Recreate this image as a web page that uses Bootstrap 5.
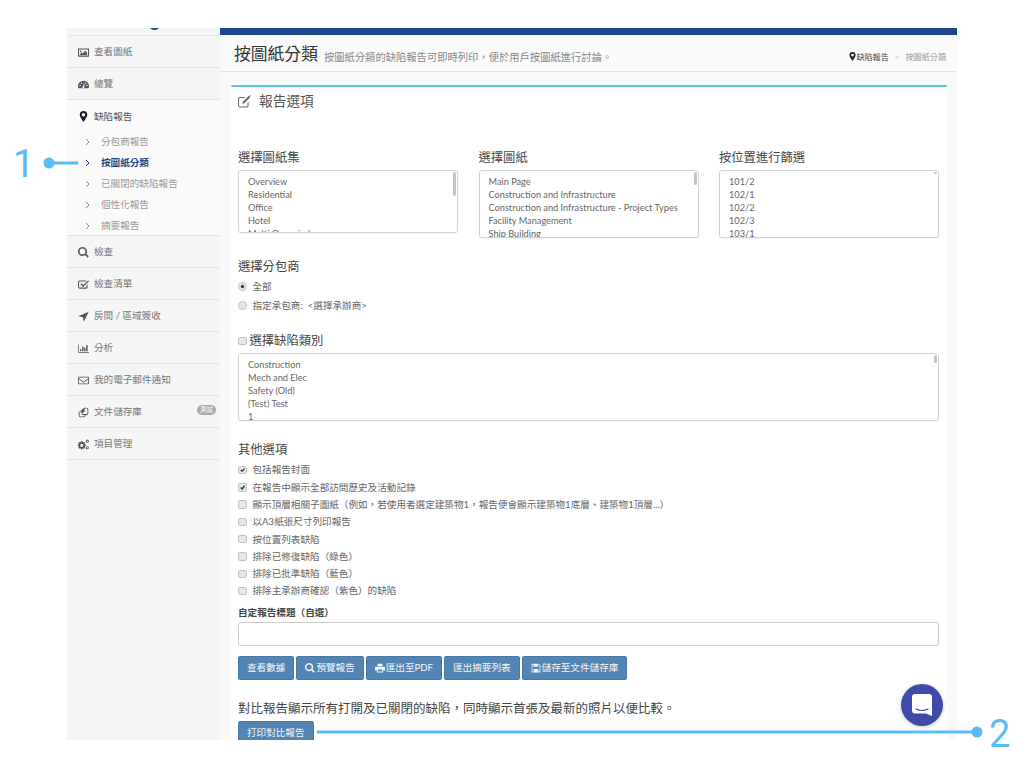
<!DOCTYPE html>
<html lang="zh-Hant">
<head>
  <meta charset="UTF-8" />
  <meta name="viewport" content="width=device-width, initial-scale=1" />
  <title>按圖紙分類</title>
  <link href="https://cdn.jsdelivr.net/npm/bootstrap@5.3.0/dist/css/bootstrap.min.css" rel="stylesheet" />
  <style>
    html, body { height: 768px; overflow: hidden; background: #fff; }
    body {
      position: relative;
      font-family: Lato, "Noto Sans CJK TC", sans-serif;
      font-size: 9.6px;
      color: #666;
      line-height: 1.4;
    }
    .app-frame { margin: 28px 0 0 67px; width: 890px; height: 712px; overflow: hidden; background: #f9f9f9; }

    /* sidebar */
    .side-col { width: 153px; flex: none; background: #f5f5f5; }
    .side-logo { height: 7.5px; overflow: hidden; border-bottom: 1px solid #e6e6e6; }
    .side-logo i { display: block; width: 11px; height: 11px; margin: -9px 0 0 82px; border-radius: 50%; background: #1f4788; }
    .side-link { height: 32px; padding: 2px 0 0 11px; gap: 5px; color: #777; border-bottom: 1px solid #e3e3e3; text-decoration: none; }
    .side-link svg { width: 11px; height: 11px; flex: none; fill: #555; }
    .side-open { height: 136px; background: #fafafa; border-bottom: 1px solid #e3e3e3; }
    .side-open .side-link { height: 32px; border-bottom: 0; color: #555; }
    .side-open .side-link svg { fill: #222; }
    .side-sub { height: 21px; padding-left: 18px; gap: 11px; color: #999; text-decoration: none; }
    .side-sub svg { width: 5px; height: 8px; flex: none; fill: none; stroke: #888; stroke-width: 1; }
    .side-sub.current { color: #1f4788; font-weight: 700; }
    .side-sub.current svg { stroke: #1f4788; }
    .side-pill { font-size: 6.5px; line-height: 10px; background: #aaa; color: #fff; border-radius: 5px; padding: 0 3px; margin: -4px 4px 0 auto; }

    /* main */
    .top-stripe { height: 7px; background: #1f4788; }
    .page-head { height: 37px; padding: 3px 11px 0 14px; background: #fafafa; border-bottom: 1px solid #e5e5e5; }
    .page-title { font-size: 16.8px; color: #333; font-weight: 400; margin: 0; line-height: 1; }
    .page-desc { font-size: 10.3px; color: #888; margin: 5px 0 0 6px; }
    .crumbs { margin: 7px 0 0 auto; font-size: 8.1px; color: #444; }
    .crumbs svg { width: 7px; height: 9px; fill: #222; vertical-align: -1px; }
    .crumbs .sep { color: #bbb; margin: 0 6px; }
    .crumbs .here { color: #999; }
    .report-box { margin: 13px 10px 0 11px; background: #fff; border-top: 2px solid #5bc0de; border-radius: 2px 2px 0 0; padding: 5px 8px 0 7px; height: 700px; }
    .box-title { font-size: 13.7px; line-height: 18px; color: #555; margin: 0; font-weight: 400; gap: 8px; }
    .box-title svg { width: 13px; height: 13px; fill: #666; }
    .report-picks { margin-top: 40px; }
    .sec-title { font-size: 12.3px; line-height: 16px; color: #444; font-weight: 400; margin: 0 0 4px; }
    .sec-sub { margin: 21px 0 2px; }
    .sec-cat { margin: 18px 0 4px; gap: 3px; }
    .sec-other { margin: 21px 0 3.4px; }
    .sec-cat .form-check-input[type=checkbox] { width: 8.5px; height: 8.5px; margin: 0; flex: none; background-color: #e6e6e6; border: 1px solid #c4c4c4; border-radius: 2px; }
    .pick-wrap { position: relative; }
    .pick-list {
      display: block; width: 100%; padding: 5px 0 0 9px; font-size: 9.2px; line-height: 13px; color: #666;
      border: 1px solid #d4d4d4; border-radius: 3px; outline: 0; overflow: hidden; background: #fff;
      box-shadow: 0 1px 1px rgba(0,0,0,.05);
    }
    .pick-short { height: 63px; }
    .pick-tall { height: 68px; }
    .pick-list option { padding: 0; min-height: 13px; line-height: 13px; }
    .fake-thumb { position: absolute; top: 2px; right: 2px; width: 3px; background: #c4c4c4; border-radius: 2px; }
    .pick-col { width: 220px; flex: none; }
    .tick-row { height: 17.3px; gap: 6px; color: #666; margin: 0; }
    .radio-row { height: 19px; }
    .tick-row .form-check-input {
      width: 8.5px; height: 8.5px; margin: 0; flex: none; background-color: #e6e6e6; border: 1px solid #c4c4c4;
      border-radius: 2px; box-shadow: none;
    }
    .tick-row .form-check-input[type=radio] { border-radius: 50%; }
    .tick-row .form-check-input:checked { background-color: #e6e6e6; border-color: #c4c4c4; background-size: 100%; }
    .tick-row .form-check-input[type=checkbox]:checked {
      background-image: url("data:image/svg+xml,%3csvg xmlns='http://www.w3.org/2000/svg' viewBox='0 0 20 20'%3e%3cpath fill='none' stroke='%23333' stroke-width='4' d='M5 10l4 4 7-9'/%3e%3c/svg%3e");
    }
    .tick-row .form-check-input[type=radio]:checked {
      background-image: url("data:image/svg+xml,%3csvg xmlns='http://www.w3.org/2000/svg' viewBox='-4 -4 8 8'%3e%3ccircle r='2' fill='%23444'/%3e%3c/svg%3e");
    }
    .title-label { font-size: 9.6px; font-weight: 700; color: #444; line-height: 14px; margin: 6px 0 2px; }
    .title-input { height: 24px; min-height: 24px; padding: 0 8px; border: 1px solid #ccc; border-radius: 3px; font-size: 10px; box-shadow: none; }
    .btn-line { margin-top: 10px; gap: 2px; }
    .act-btn {
      height: 24px; padding: 0 8px; background: #5285b3; border: 1px solid #4878a5; border-radius: 2px;
      color: #f2f5f8; font-size: 9.6px; line-height: 1; white-space: nowrap; gap: 1px;
    }
    .act-btn:hover { background: #4878a5; color: #fff; border-color: #4878a5; }
    .act-btn svg { width: 10px; height: 10px; fill: #f2f5f8; }
    .compare-note { font-size: 12.5px; line-height: 18px; color: #444; margin: 20px 0 3px; }

    /* floating chat button */
    .chat-fab { position: absolute; left: 901px; top: 684px; width: 42px; height: 42px; border-radius: 50%; background: #3f4ba8; box-shadow: 0 1px 5px rgba(0,0,0,.2); border: 0; padding: 0; }
    .chat-fab svg { width: 42px; height: 42px; display: block; }

    /* callouts drawn on top of the screenshot */
    .callout { position: absolute; left: 0; top: 0; width: 1024px; height: 768px; pointer-events: none; }
    .callout-num { position: absolute; font-family: Roboto, "Liberation Sans", sans-serif; font-size: 38px; line-height: 38px; color: #5bbcf5; font-weight: 400; }
    .num-one { left: 13px; top: 145px; }
    .num-two { left: 989px; top: 715px; }
  </style>
</head>
<body>
  <div class="app-frame d-flex">
    <!-- Sidebar -->
    <nav class="side-col">
      <div class="side-logo"><i></i></div>
      <a class="side-link d-flex align-items-center" href="#">
        <svg viewBox="0 0 16 16"><path d="M0 2h16v12H0zm1.500 1.500v9h13v-9zM4 5a1.300 1.300 0 1 1 0 2.600A1.300 1.300 0 0 1 4 5zm-1 6.500V10l2-2 1.500 1.500 4-4 2.500 2.500v3.500z" fill-rule="evenodd"/></svg>查看圖紙</a>
      <a class="side-link d-flex align-items-center" href="#">
        <svg viewBox="0 0 16 16"><path d="M8 2.500a8 8 0 0 0-8 8c0 1.100.2 2 .6 3h14.800c.4-1 .6-1.900.6-3a8 8 0 0 0-8-8zM3 10.500a1 1 0 1 1 0-2 1 1 0 0 1 0 2zm2-3.500a1 1 0 1 1 0-2 1 1 0 0 1 0 2zm4.200 5.300a1.500 1.500 0 1 1-2-1.200L8.500 6h.8zM11 7a1 1 0 1 1 0-2 1 1 0 0 1 0 2zm2 3.500a1 1 0 1 1 0-2 1 1 0 0 1 0 2z" fill-rule="evenodd"/></svg>總覽</a>
      <div class="side-open">
        <a class="side-link d-flex align-items-center" href="#">
          <svg viewBox="0 0 16 16"><path d="M8 0a5.500 5.500 0 0 0-5.500 5.500C2.500 9 8 16 8 16s5.500-7 5.500-10.500A5.500 5.500 0 0 0 8 0zm0 8a2.500 2.500 0 1 1 0-5 2.500 2.500 0 0 1 0 5z" fill-rule="evenodd"/></svg>缺陷報告</a>
        <a class="side-sub d-flex align-items-center" href="#"><svg viewBox="0 0 5 8"><path d="M1 1l3 3-3 3"/></svg>分包商報告</a>
        <a class="side-sub current d-flex align-items-center" href="#"><svg viewBox="0 0 5 8"><path d="M1 1l3 3-3 3"/></svg>按圖紙分類</a>
        <a class="side-sub d-flex align-items-center" href="#"><svg viewBox="0 0 5 8"><path d="M1 1l3 3-3 3"/></svg>已關閉的缺陷報告</a>
        <a class="side-sub d-flex align-items-center" href="#"><svg viewBox="0 0 5 8"><path d="M1 1l3 3-3 3"/></svg>個性化報告</a>
        <a class="side-sub d-flex align-items-center" href="#"><svg viewBox="0 0 5 8"><path d="M1 1l3 3-3 3"/></svg>摘要報告</a>
      </div>
      <a class="side-link d-flex align-items-center" href="#">
        <svg viewBox="0 0 16 16"><path d="M6.500 0a6.500 6.500 0 1 0 3.700 11.800l3.600 3.700 1.900-1.900-3.700-3.600A6.500 6.500 0 0 0 6.500 0zm0 2.300a4.200 4.200 0 1 1 0 8.400 4.200 4.200 0 0 1 0-8.400z" fill-rule="evenodd"/></svg>檢查</a>
      <a class="side-link d-flex align-items-center" href="#">
        <svg viewBox="0 0 16 16"><path d="M2.500 2H12v1.500H2.500a1 1 0 0 0-1 1v7a1 1 0 0 0 1 1h9a1 1 0 0 0 1-1V9L14 7.500v4a2.500 2.500 0 0 1-2.500 2.500h-9A2.500 2.500 0 0 1 0 11.500v-7A2.500 2.500 0 0 1 2.500 2zm12.300 0L16 3.200 7.500 11.500 3.500 7.600l1.300-1.300 2.700 2.600z"/></svg>檢查清單</a>
      <a class="side-link d-flex align-items-center" href="#">
        <svg viewBox="0 0 16 16"><path d="M15.500 1L8.500 15.500 7 9 .5 7.800z"/></svg>房間 / 區域簽收</a>
      <a class="side-link d-flex align-items-center" href="#">
        <svg viewBox="0 0 16 16"><path d="M0 2h1v11h15v1H0zm3 7h2v3H3zm3-4h2v7H6zm3 2h2v5H9zm3-4h2v9h-2z"/></svg>分析</a>
      <a class="side-link d-flex align-items-center" href="#">
        <svg viewBox="0 0 16 16"><path d="M1.500 2.500h13A1.500 1.500 0 0 1 16 4v8a1.500 1.500 0 0 1-1.500 1.500h-13A1.500 1.500 0 0 1 0 12V4a1.500 1.500 0 0 1 1.500-1.500zm0 1.200a.3.300 0 0 0-.3.300v.7L8 9.700l6.800-5V4a.3.300 0 0 0-.3-.3zm13.300 2.500L8 11.200 1.200 6.200V12c0 .2.100.3.300.3h13c.2 0 .3-.1.300-.3z" fill-rule="evenodd"/></svg>我的電子郵件通知</a>
      <a class="side-link d-flex align-items-center" href="#">
        <svg viewBox="0 0 16 16"><path d="M9 1h3.500A2.500 2.500 0 0 1 15 3.500V9a2.500 2.500 0 0 1-2.500 2.500H11v1A2.500 2.500 0 0 1 8.500 15h-5A2.500 2.500 0 0 1 1 12.500V8zm-.5 1.800L2.300 8.500v4c0 .7.500 1.200 1.200 1.200h5c.7 0 1.200-.5 1.200-1.200v-1H7.500A2.500 2.500 0 0 1 5 9V6zm1.200-.5v3.700L6.300 9c0 .7.500 1.200 1.200 1.200h5c.7 0 1.200-.5 1.200-1.200V3.500c0-.7-.5-1.200-1.200-1.200z" fill-rule="evenodd"/></svg>文件儲存庫<span class="side-pill">測試</span></a>
      <a class="side-link d-flex align-items-center" href="#">
        <svg viewBox="0 0 16 16"><path d="M6.300 3l.4 1.500 1.100.5 1.300-.8 1.300 1.300-.8 1.300.5 1.100 1.500.4v1.800l-1.500.4-.5 1.100.8 1.300-1.300 1.300-1.300-.8-1.100.5-.4 1.500H4.500l-.4-1.500-1.100-.5-1.300.8L.4 12.900l.8-1.300-.5-1.100L-.8 10.100V8.300l1.500-.4.500-1.100-.8-1.300L1.700 4.200l1.300.8 1.100-.5L4.500 3zM5.400 6.900a2.300 2.300 0 1 0 0 4.600 2.300 2.300 0 0 0 0-4.600zM13.500.8a2.300 2.300 0 1 1 0 4.600 2.300 2.300 0 0 1 0-4.600zm0 1.300a1 1 0 1 0 0 2 1 1 0 0 0 0-2zm0 8.300a2.300 2.300 0 1 1 0 4.600 2.300 2.300 0 0 1 0-4.600zm0 1.300a1 1 0 1 0 0 2 1 1 0 0 0 0-2z" fill-rule="evenodd"/></svg>項目管理</a>
    </nav>

    <!-- Main content -->
    <main class="flex-grow-1">
      <div class="top-stripe"></div>
      <div class="page-head d-flex align-items-center">
        <h1 class="page-title">按圖紙分類</h1>
        <span class="page-desc">按圖紙分類的缺陷報告可即時列印，便於用戶按圖紙進行討論。</span>
        <div class="crumbs">
          <svg viewBox="0 0 12 16"><path d="M6 0a5.500 5.500 0 0 0-5.500 5.500C.5 9 6 16 6 16s5.500-7 5.500-10.500A5.500 5.500 0 0 0 6 0zm0 8a2.500 2.500 0 1 1 0-5 2.500 2.500 0 0 1 0 5z" fill-rule="evenodd"/></svg>缺陷報告<span class="sep">&gt;</span><span class="here">按圖紙分類</span>
        </div>
      </div>

      <section class="report-box">
        <h2 class="box-title d-flex align-items-center">
          <svg viewBox="0 0 16 16"><path d="M2.500 2.500H9L7.800 3.800H2.500c-.7 0-1.200.5-1.200 1.200v8c0 .7.500 1.200 1.200 1.200h8c.7 0 1.200-.5 1.200-1.200V9.500L13 8.200V13a2.500 2.500 0 0 1-2.500 2.500h-8A2.500 2.500 0 0 1 0 13V5a2.500 2.500 0 0 1 2.500-2.500zM13.500.8l1.800 1.800-7.500 7.500-2.600.8.800-2.600zM16 1.900L14.200.1c.3-.2.700-.2 1 0l.8.800c.3.300.3.700 0 1z"/></svg>報告選項</h2>

        <div class="d-flex justify-content-between align-items-start report-picks">
          <div class="pick-col">
            <h3 class="sec-title">選擇圖紙集</h3>
            <div class="pick-wrap">
              <select class="pick-list pick-short" multiple>
                <option>Overview</option><option>Residential</option><option>Office</option><option>Hotel</option><option>Multi Occupied</option><option>Retail</option><option>Industrial</option><option>Education</option><option>Healthcare</option>
              </select>
              <i class="fake-thumb" style="height:24px"></i>
            </div>
          </div>
          <div class="pick-col">
            <h3 class="sec-title">選擇圖紙</h3>
            <div class="pick-wrap">
              <select class="pick-list pick-tall" multiple>
                <option>Main Page</option><option>Construction and Infrastructure</option><option>Construction and Infrastructure - Project Types</option><option>Facility Management</option><option>Ship Building</option><option>Oil and Gas</option><option>Mining</option><option>Utilities</option><option>Other</option><option>Fit Out</option><option>Residential</option><option>Office</option><option>Hotel</option>
              </select>
              <i class="fake-thumb" style="height:13px"></i>
            </div>
          </div>
          <div class="pick-col">
            <h3 class="sec-title">按位置進行篩選</h3>
            <div class="pick-wrap">
              <select class="pick-list pick-tall" multiple>
                <option>101/2</option><option>102/1</option><option>102/2</option><option>102/3</option><option>103/1</option><option>103/2</option><option>104/1</option><option>104/2</option><option>105/1</option><option>105/2</option><option>106/1</option><option>106/2</option>
              </select>
              <i class="fake-thumb" style="height:2px"></i>
            </div>
          </div>
        </div>

        <h3 class="sec-title sec-sub">選擇分包商</h3>
        <label class="tick-row radio-row d-flex align-items-center"><input class="form-check-input" type="radio" name="sub" checked />全部</label>
        <label class="tick-row radio-row d-flex align-items-center"><input class="form-check-input" type="radio" name="sub" />指定承包商:&nbsp; &lt;選擇承辦商&gt;</label>

        <h3 class="sec-title sec-cat d-flex align-items-center"><input class="form-check-input" type="checkbox" />選擇缺陷類別</h3>
        <div class="pick-wrap">
          <select class="pick-list pick-tall" multiple>
            <option>Construction</option><option>Mech and Elec</option><option>Safety (Old)</option><option>(Test) Test</option><option>1</option><option>2</option><option>3</option><option>4</option><option>5</option><option>6</option><option>7</option><option>8</option>
          </select>
          <i class="fake-thumb" style="height:8px"></i>
        </div>

        <h3 class="sec-title sec-other">其他選項</h3>
        <label class="tick-row d-flex align-items-center"><input class="form-check-input" type="checkbox" checked />包括報告封面</label>
        <label class="tick-row d-flex align-items-center"><input class="form-check-input" type="checkbox" checked />在報告中顯示全部訪問歷史及活動記錄</label>
        <label class="tick-row d-flex align-items-center"><input class="form-check-input" type="checkbox" />顯示頂層相關子圖紙（例如，若使用者選定建築物1，報告便會顯示建築物1底層、建築物1頂層...）</label>
        <label class="tick-row d-flex align-items-center"><input class="form-check-input" type="checkbox" />以A3紙張尺寸列印報告</label>
        <label class="tick-row d-flex align-items-center"><input class="form-check-input" type="checkbox" />按位置列表缺陷</label>
        <label class="tick-row d-flex align-items-center"><input class="form-check-input" type="checkbox" />排除已修復缺陷（綠色）</label>
        <label class="tick-row d-flex align-items-center"><input class="form-check-input" type="checkbox" />排除已批準缺陷（藍色）</label>
        <label class="tick-row d-flex align-items-center"><input class="form-check-input" type="checkbox" />排除主承辦商確認（紫色）的缺陷</label>

        <label class="title-label d-block" for="customTitle">自定報告標題（自選）</label>
        <input id="customTitle" class="form-control title-input" type="text" />

        <div class="d-flex btn-line">
          <button class="btn act-btn d-flex align-items-center" type="button">查看數據</button>
          <button class="btn act-btn d-flex align-items-center" type="button"><svg viewBox="0 0 16 16"><path d="M6.500 0a6.500 6.500 0 1 0 3.700 11.800l3.600 3.700 1.900-1.900-3.700-3.600A6.500 6.500 0 0 0 6.500 0zm0 2.300a4.200 4.200 0 1 1 0 8.400 4.200 4.200 0 0 1 0-8.400z" fill-rule="evenodd"/></svg>預覽報告</button>
          <button class="btn act-btn d-flex align-items-center" type="button"><svg viewBox="0 0 16 16"><path d="M4 1h8v4H4zM1.500 6h13c.8 0 1.500.7 1.500 1.500V12h-3v3H3v-3H0V7.500C0 6.700.7 6 1.500 6zM4.500 10.500v3h7v-3z" fill-rule="evenodd"/></svg>匯出至PDF</button>
          <button class="btn act-btn d-flex align-items-center" type="button">匯出摘要列表</button>
          <button class="btn act-btn d-flex align-items-center" type="button"><svg viewBox="0 0 16 16"><path d="M1 1h11l3 3v11H1zm1.300 1.300v11.400h11.400V4.600L11.400 2.300H11V6H4V2.300zm2 7.200h7.400v4.200H4.300z" fill-rule="evenodd"/></svg>儲存至文件儲存庫</button>
        </div>

        <p class="compare-note">對比報告顯示所有打開及已關閉的缺陷，同時顯示首張及最新的照片以便比較。</p>
        <button class="btn act-btn" type="button">打印對比報告</button>
      </section>
    </main>
  </div>

  <!-- chat launcher -->
  <button class="chat-fab" type="button" aria-label="Chat">
    <svg viewBox="0 0 42 42"><path d="M11 13a3 3 0 0 1 3-3h14a3 3 0 0 1 3 3v19l-6-2.500H14a3 3 0 0 1-3-3z" fill="#fff"/><path d="M15 25c4 2 8 2 12 0" fill="none" stroke="#3f4ba8" stroke-width="1.200" stroke-linecap="round"/></svg>
  </button>

  <!-- numbered callouts -->
  <svg class="callout" viewBox="0 0 1024 768">
    <circle cx="49" cy="163" r="5.500" fill="#5bbcf5"/>
    <rect x="49" y="161.500" width="29" height="3" fill="#5bbcf5"/>
    <circle cx="977" cy="732" r="5.500" fill="#5bbcf5"/>
    <rect x="317" y="730.500" width="660" height="3" fill="#5bbcf5"/>
  </svg>
  <span class="callout-num num-one">1</span>
  <span class="callout-num num-two">2</span>

  <script src="https://cdn.jsdelivr.net/npm/bootstrap@5.3.0/dist/js/bootstrap.bundle.min.js"></script>
</body>
</html>
